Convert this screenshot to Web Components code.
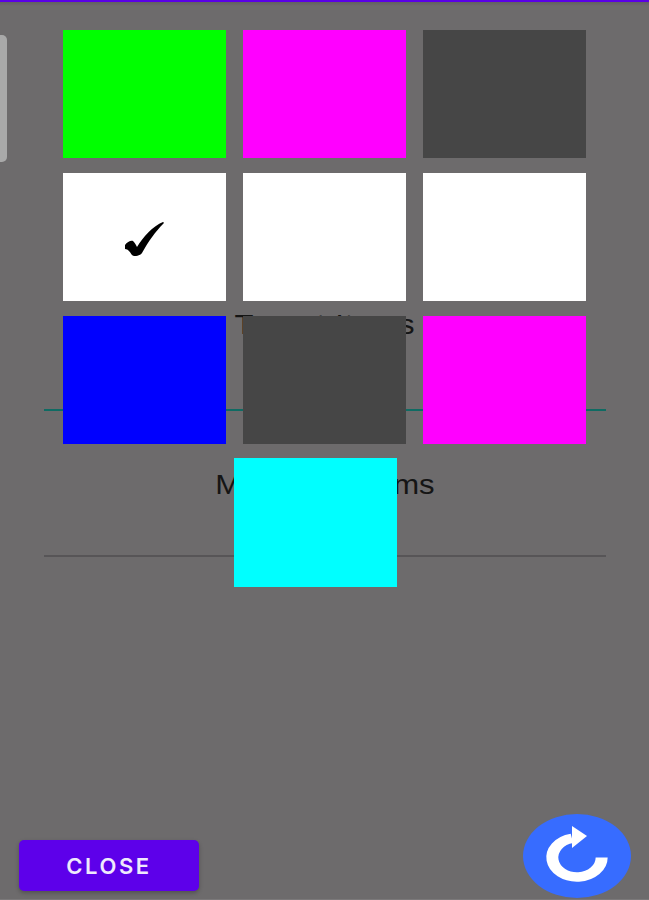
<!DOCTYPE html>
<html>
<head>
<meta charset="utf-8">
<title>Colour picker</title>
<style>
html, body { margin: 0; height: 100%; }
body { background: #6d6b6c; font-family: "Liberation Sans", Arial, sans-serif; overflow: hidden; }
</style>
</head>
<body>
<settings-screen>
  <setting-field slot="fields" label="Target Items" active></setting-field>
  <setting-field slot="fields" label="Maximum Items"></setting-field>
  <color-swatch slot="swatches" color="#00ff00"></color-swatch>
  <color-swatch slot="swatches" color="#ff00ff"></color-swatch>
  <color-swatch slot="swatches" color="#464646"></color-swatch>
  <color-swatch slot="swatches" color="#ffffff" checked></color-swatch>
  <color-swatch slot="swatches" color="#ffffff"></color-swatch>
  <color-swatch slot="swatches" color="#ffffff"></color-swatch>
  <color-swatch slot="swatches" color="#0000ff"></color-swatch>
  <color-swatch slot="swatches" color="#464646"></color-swatch>
  <color-swatch slot="swatches" color="#ff00ff"></color-swatch>
  <color-swatch slot="swatches" color="#00ffff" class="last"></color-swatch>
  <close-button slot="actions">Close</close-button>
  <reload-fab slot="actions"></reload-fab>
</settings-screen>

<script>
// whole screen: form fields at the back, swatch dialog lying over them
var template_screen = document.createElement("template");
template_screen.innerHTML = `
<style>
:host { display: block; position: relative; width: 649px; height: 900px; overflow: hidden; box-sizing: border-box; border-top: 2px solid #5a00e6; background: linear-gradient(#625f61, #6d6b6c 4px, #6d6b6c 897px, #7b797a 897px); }
.fields { display: flex; flex-direction: column; gap: 56px; padding: 305px 43px 0 44px; }
.handle { position: absolute; left: 0; top: 33px; width: 7px; height: 127px; background: #a9a9a9; border-radius: 0 5px 5px 0; }
.swatches { position: absolute; left: 63px; top: 28px; width: 523px; display: grid; grid-template-columns: repeat(3, 163px); column-gap: 17px; row-gap: 15px; }
.actions { position: absolute; left: 18px; right: 18px; bottom: 0; height: 60px; display: flex; justify-content: space-between; align-items: flex-start; }
::slotted(color-swatch.last) { grid-column: 2; margin: -1px 9px 0 -9px; height: 129px; }
</style>
<div class="fields"><slot name="fields"></slot></div>
<div class="handle"></div>
<div class="swatches"><slot name="swatches"></slot></div>
<div class="actions"><slot name="actions"></slot></div>
`;

class SettingsScreen extends HTMLElement {
    constructor(){
        super();
        this.attachShadow({mode:"open"});
    }
    connectedCallback(){
        this.shadowRoot.appendChild(template_screen.content.cloneNode(true));
    }
}

var template_field = document.createElement("template");
template_field.innerHTML = `
<style>
:host { display: block; text-align: center; }
.label { font-size: 28px; line-height: 36px; color: #151515; transform: scaleX(1.11); }
:host([active]) .label { letter-spacing: 0.75px; }
.line { height: 2px; margin-top: 52px; background: #575557; }
:host([active]) .line { margin-top: 66px; background: #0f6b63; }
</style>
<div class="label"></div>
<div class="line"></div>
`;

class SettingField extends HTMLElement {
    constructor(){
        super();
        this.attachShadow({mode:"open"});
    }
    connectedCallback(){
        this.shadowRoot.appendChild(template_field.content.cloneNode(true));
        this.shadowRoot.querySelector(".label").textContent = this.getAttribute("label");
    }
}

var template_swatch = document.createElement("template");
template_swatch.innerHTML = `
<style>
:host { display: flex; align-items: center; justify-content: center; height: 128px; }
svg { width: 39px; height: 34px; margin-top: 4px; display: none; }
:host([checked]) svg { display: block; }
</style>
<svg viewBox="0 0 39 34"><path d="M0 23 C2 20 6 18 8 19 C10 21 11 23 12 25 C18 15 28 4 38 0 C39 0 39 1 38 2 C31 9 23 20 17 31 C15 34 9 35 7 33 C5 30 3 27 0 27 Z" fill="#000"/></svg>
`;

class ColorSwatch extends HTMLElement {
    constructor(){
        super();
        this.attachShadow({mode:"open"});
    }
    connectedCallback(){
        this.shadowRoot.appendChild(template_swatch.content.cloneNode(true));
        this.style.background = this.getAttribute("color");
    }
}

var template_close = document.createElement("template");
template_close.innerHTML = `
<style>
:host { display: flex; align-items: center; justify-content: center; width: 180px; height: 51px; margin-left: 1px; background: #5d00ea; border-radius: 5px; box-shadow: 0 2px 4px rgba(0,0,0,.25); color: #efe9fd; font: 600 22px Inter, Roboto, sans-serif; letter-spacing: 2.6px; text-transform: uppercase; }
</style>
<slot></slot>
`;

class CloseButton extends HTMLElement {
    constructor(){
        super();
        this.attachShadow({mode:"open"});
    }
    connectedCallback(){
        this.shadowRoot.appendChild(template_close.content.cloneNode(true));
    }
}

var template_fab = document.createElement("template");
template_fab.innerHTML = `
<style>
:host { display: block; width: 108px; height: 84px; margin-top: -26px; background: #376cff; border-radius: 50%; }
svg { display: block; width: 108px; height: 84px; }
</style>
<svg viewBox="0 0 108 84">
  <g transform="translate(54 43.5) scale(1.265 1)">
    <path d="M19.5 0 A19.5 19.5 0 1 1 -4 -19.1" fill="none" stroke="#fff" stroke-width="9.5"/>
  </g>
  <path d="M49 12 L64 22 L49 34 Z" fill="#fff"/>
</svg>
`;

class ReloadFab extends HTMLElement {
    constructor(){
        super();
        this.attachShadow({mode:"open"});
    }
    connectedCallback(){
        this.shadowRoot.appendChild(template_fab.content.cloneNode(true));
    }
}

customElements.define("settings-screen", SettingsScreen);
customElements.define("setting-field", SettingField);
customElements.define("color-swatch", ColorSwatch);
customElements.define("close-button", CloseButton);
customElements.define("reload-fab", ReloadFab);
</script>
</body>
</html>
